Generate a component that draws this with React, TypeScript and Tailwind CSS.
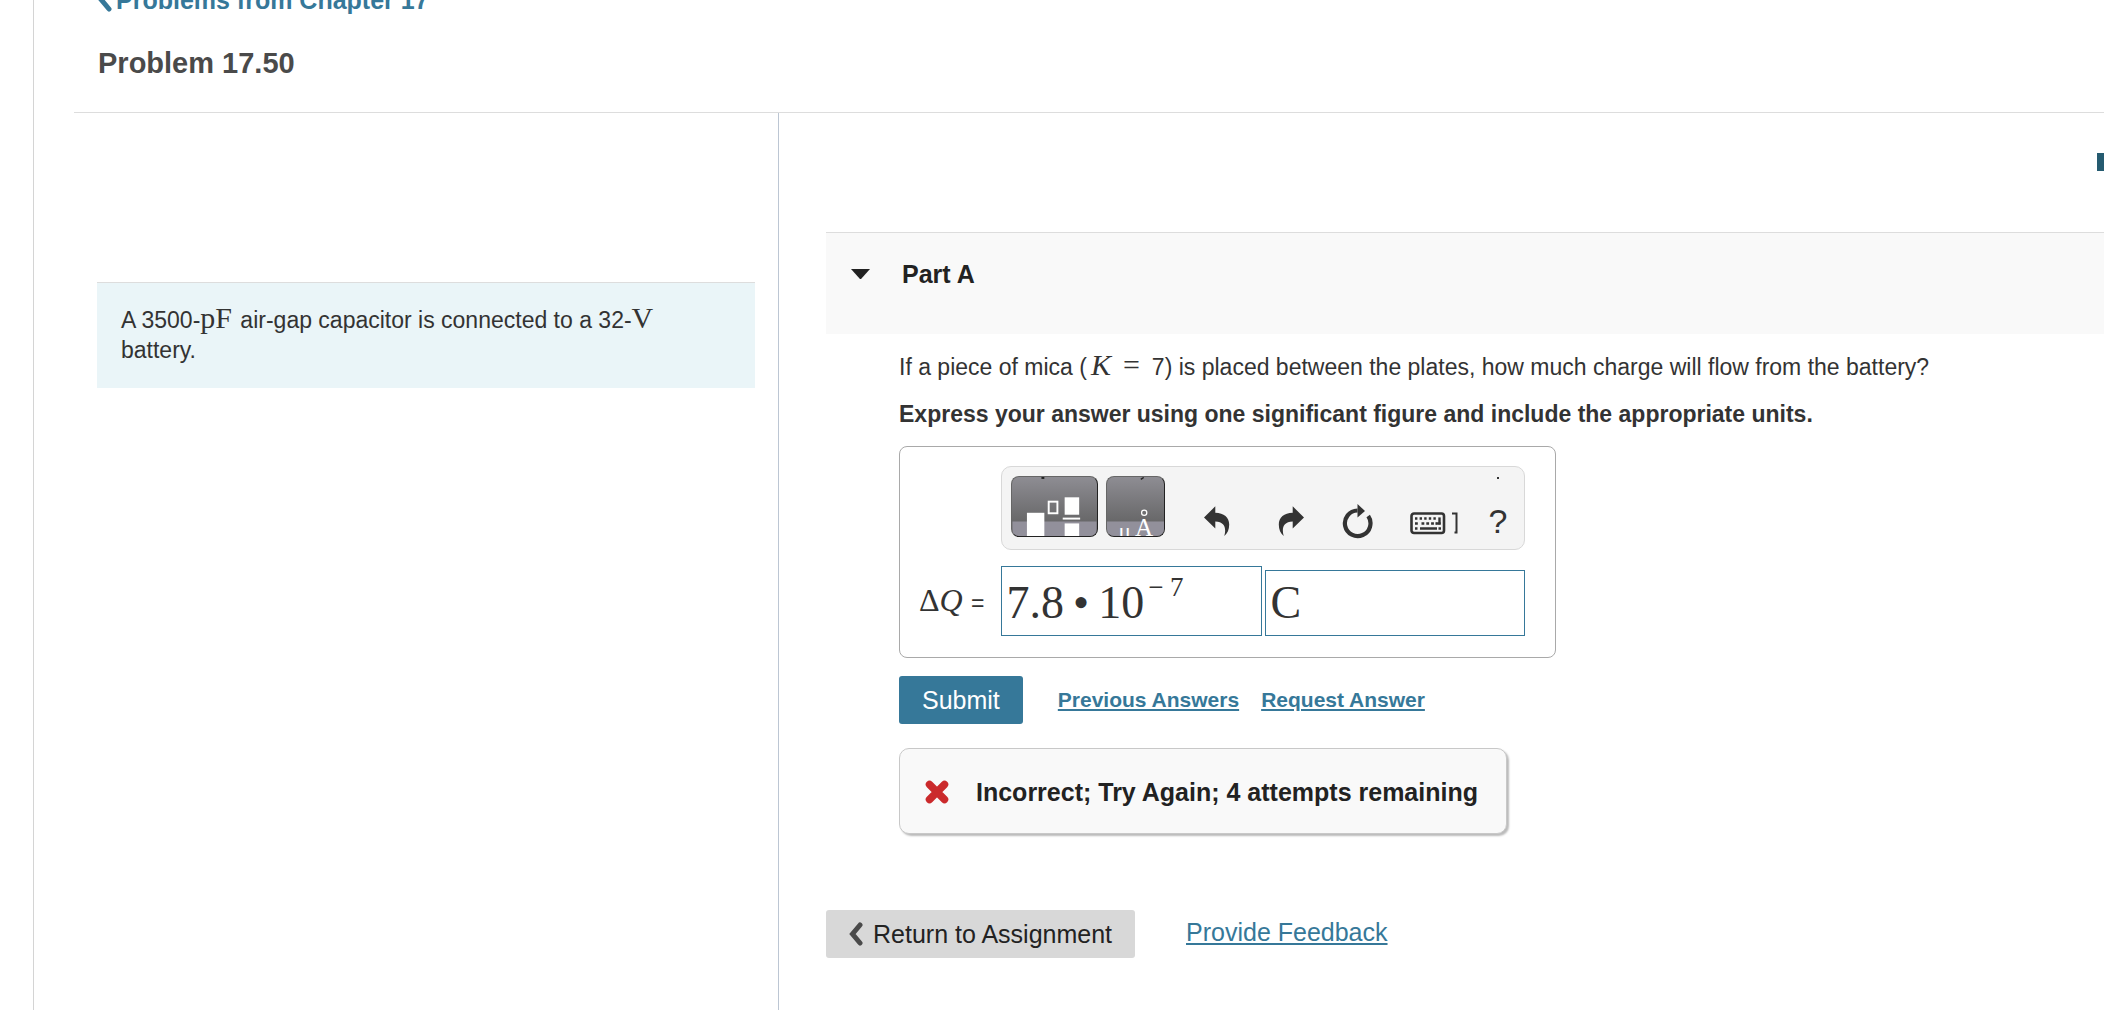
import React from "react";

function Chevron({ className }: { className: string }) {
  return (
    <svg viewBox="0 0 14 24" className={className} fill="none" stroke="currentColor" strokeWidth="5" strokeLinecap="round" aria-hidden="true">
      <path d="M11 3 3.500 12 11 21" />
    </svg>
  );
}

function Undo({ className }: { className: string }) {
  return (
    <svg viewBox="0 0 27 31" className={className} fill="currentColor" aria-hidden="true">
      <path d="M0 11.500 11.300 .3V6.800C20 7 25.200 11.500 25.200 18.500C25.200 23.500 23.500 27.500 20.300 30C22.300 23 21.300 15.800 11.300 15.500V22.500Z" />
    </svg>
  );
}

function Reset() {
  return (
    <svg viewBox="0 0 32 36" className="h-9 w-8" aria-hidden="true">
      <path d="M15.500 7.500A12.800 12.800 0 1 0 26.200 13" fill="none" stroke="currentColor" strokeWidth="4.200" />
      <path d="M15.500 1 23 8 15.500 14.500Z" fill="currentColor" />
    </svg>
  );
}

function Keyboard() {
  return (
    <svg viewBox="0 0 36 23" className="h-[23px] w-9" fill="none" stroke="currentColor" aria-hidden="true">
      <rect x="1.500" y="1.500" width="32.500" height="19.500" rx="2.500" strokeWidth="2.600" />
      <path d="M5 6.500h22" strokeWidth="2.400" strokeDasharray="2.400 2.200" />
      <path d="M5 11.500h4M11.500 11.500h15" strokeWidth="2.400" strokeDasharray="2.800 2" />
      <path d="M5 16.500h2.500M10 16.500h17M28.500 16.500h2.500M25.500 11.500h5.200" strokeWidth="2.400" />
      <path d="M29.500 5.400v7" strokeWidth="2.400" />
    </svg>
  );
}

function Templates() {
  return (
    <svg viewBox="0 0 87 61" className="h-full w-full" aria-hidden="true">
      <rect y="46" width="87" height="15" fill="#92909b" />
      <rect x="15" y="37" width="18" height="24" fill="#fff" />
      <rect x="37.500" y="25.500" width="9" height="12" fill="none" stroke="#fff" strokeWidth="2" />
      <rect x="54" y="21" width="15" height="18" fill="#fff" />
      <rect x="52" y="42" width="18" height="2" fill="#fff" />
      <rect x="54" y="48" width="15" height="13" fill="#fff" />
      <rect x="30" y="0" width="3" height="2" fill="#222" />
    </svg>
  );
}

function Units() {
  return (
    <svg viewBox="0 0 59 61" className="h-full w-full" aria-hidden="true">
      <rect y="46" width="59" height="15" fill="#92909b" />
      <text x="12" y="64" fill="#fff" fontSize="24" fontFamily="Liberation Serif, serif">μ</text>
      <text x="29" y="61" fill="#fff" fontSize="26" fontFamily="Liberation Serif, serif">A</text>
      <circle cx="38.500" cy="37" r="2.700" fill="none" stroke="#fff" strokeWidth="1.300" />
      <path d="M35 2.500 38 .5" stroke="#222" strokeWidth="1.500" />
    </svg>
  );
}

const paletteButton =
  "h-[61px] shrink-0 overflow-hidden rounded-lg border border-[#666] border-r-[#222] border-b-[#222] bg-linear-to-b from-[#8e8d93] to-[#5c5c5c]";

const math = "font-['Liberation_Serif',serif] text-[30px] leading-5";

export default function App() {
  return (
    <div className="h-screen overflow-hidden bg-white pl-[33px] font-['Liberation_Sans',Arial,sans-serif] text-[23px] leading-[30px] text-[#333]">
      <div className="flex h-full flex-col border-l border-[#d4d4d4] pl-10">
        <header className="flex flex-col border-b border-[#ddd] pb-8 pl-6">
          <a href="#" className="-mt-[15px] flex items-center gap-1 text-[25px] font-bold text-[#367899]">
            <Chevron className="h-6 w-[14px]" />
            Problems from Chapter 17
          </a>
          <h1 className="mt-[31px] text-[29px] leading-[34px] font-bold text-[#4a4a4a]">Problem 17.50</h1>
        </header>

        <div className="flex min-h-0 flex-1">
          <aside className="w-[705px] shrink-0 border-r border-[#bcc6d3] pt-[169px] pr-[23px] pl-[23px]">
            <p className="border-t border-[#ddd] bg-[#eaf5f8] pt-[22px] pr-10 pb-[23px] pl-6">
              A 3500-<span className={`${math} mr-[2px]`}>pF</span> air-gap capacitor is connected to a 32-
              <span className={math}>V</span> battery.
            </p>
          </aside>

          <main className="min-w-0 flex-1 pl-[47px]">
            <div className="flex h-[119px] justify-end pt-10">
              <div className="h-[18px] w-[7px] bg-[#255b70]" />
            </div>

            <button type="button" className="flex h-[102px] w-full items-start gap-8 border-t border-[#ddd] bg-[#f9f9f9] pt-[26px] pl-[25px] text-left text-[25px] font-bold text-[#222]">
              <svg viewBox="0 0 19 10" className="mt-[10px] h-[10px] w-[19px]" fill="currentColor" aria-hidden="true">
                <path d="M0 0H19L10.500 9.500Q9.500 10.500 8.500 9.500Z" />
              </svg>
              Part A
            </button>

            <section className="pl-[73px]">
              <p className="pt-[18px]">
                If a piece of mica (<span className={`${math} ml-1 italic`}>K</span>
                <span className={`${math} mx-3`}>=</span>7) is placed between the plates, how much charge will flow from the battery?
              </p>
              <p className="mt-[17px] font-bold">
                Express your answer using one significant figure and include the appropriate units.
              </p>

              <div className="mt-[17px] grid w-fit grid-cols-[auto_auto] items-center gap-x-4 gap-y-4 rounded-lg border border-[#a9a9a9] pt-[19px] pr-[30px] pb-[21px] pl-[19px]">
                <div className="col-start-2 flex h-[84px] w-[524px] items-start rounded-[10px] border border-[#d8d8d8] bg-[#f4f4f4] pt-[9px] pl-[9px]">
                  <button type="button" aria-label="Templates" className={`${paletteButton} w-[87px]`}>
                    <Templates />
                  </button>
                  <button type="button" aria-label="Symbols" className={`${paletteButton} ml-2 w-[59px]`}>
                    <Units />
                  </button>
                  <div className="mt-[27px] ml-[39px] flex h-9 items-center">
                    <button type="button" aria-label="Undo"><Undo className="h-[31px] w-[27px]" /></button>
                    <button type="button" aria-label="Redo" className="ml-[46px]"><Undo className="h-[31px] w-[27px] -scale-x-100" /></button>
                    <button type="button" aria-label="Reset" className="ml-[38px]"><Reset /></button>
                    <button type="button" aria-label="Keyboard shortcuts" className="ml-[36px] flex items-center gap-[6px] pt-1">
                      <Keyboard />
                      <svg viewBox="0 0 6 22" className="h-[22px] w-[6px]" fill="none" stroke="currentColor" strokeWidth="2" aria-hidden="true">
                        <path d="M0 1.500H4.500V20.500H2.500" />
                      </svg>
                    </button>
                    <button type="button" aria-label="Help" className="relative ml-[31px] text-[34px] leading-8">
                      ?
                      <span className="absolute -top-7 left-2 size-[2px] bg-[#333]" />
                    </button>
                  </div>
                </div>

                <label htmlFor="units" className="whitespace-nowrap">
                  <span className="mr-[2px] font-['Liberation_Serif',serif] text-[32px]">Δ<i>Q</i></span> =
                </label>
                <div className="flex items-end gap-[3px] font-['Liberation_Serif',serif] text-[46px]">
                  <div role="textbox" aria-label="Value" contentEditable suppressContentEditableWarning className="flex h-[70px] flex-1 items-center border border-[#367899] pt-[3px] pl-[5px] whitespace-pre">
                    7.8<span className="mx-[9px]">•</span>10<span className="-mt-8 pl-1 text-[27px]">− 7</span>
                  </div>
                  <input id="units" aria-label="Units" defaultValue="C" className="h-[66px] w-[260px] border border-[#367899] px-[5px] pb-[2px]" />
                </div>
              </div>

              <div className="mt-[18px] flex items-center">
                <button type="button" className="h-12 rounded-[3px] bg-[#367899] px-[23px] text-[25px] text-white">Submit</button>
                <a href="#" className="ml-[35px] text-[21px] font-bold text-[#367899] underline">Previous Answers</a>
                <a href="#" className="ml-[22px] text-[21px] font-bold text-[#367899] underline">Request Answer</a>
              </div>

              <div role="status" className="mt-6 flex w-fit items-center gap-[27px] rounded-[10px] border border-[#c8c8c8] bg-[#f9f9f9] pt-7 pr-7 pb-[26px] pl-[25px] text-[25px] font-bold text-[#222] shadow-[2px_2px_2px_#bbb]">
                <svg viewBox="0 0 24 24" className="size-6" stroke="#cb2a2c" strokeWidth="7.500" strokeLinecap="round" aria-hidden="true">
                  <path d="M4.500 4.500 19.500 19.500M19.500 4.500 4.500 19.500" />
                </svg>
                Incorrect; Try Again; 4 attempts remaining
              </div>
            </section>

            <div className="mt-[76px] flex items-center gap-[51px] text-[25px]">
              <button type="button" className="flex h-12 items-center gap-[10px] rounded-[3px] bg-[#d8d8d8] px-[23px] text-[#222]">
                <Chevron className="h-6 w-[14px] text-[#4a4a4a]" />
                Return to Assignment
              </button>
              <a href="#" className="pb-1 text-[#367899] underline">Provide Feedback</a>
            </div>
          </main>
        </div>
      </div>
    </div>
  );
}
